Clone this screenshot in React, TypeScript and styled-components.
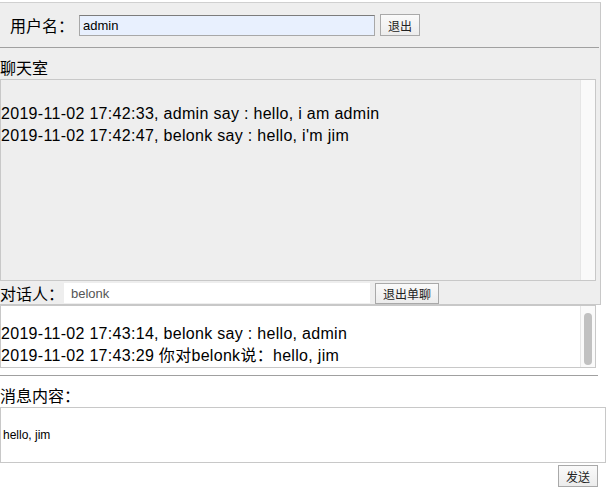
import { useEffect, useRef } from "react";
import styled, { createGlobalStyle } from "styled-components";

const GlobalStyle = createGlobalStyle`
  html, body {
    margin: 0;
    padding: 0;
    background: #ffffff;
  }
  body {
    font-family: "Liberation Sans", "Noto Sans CJK SC", sans-serif;
    color: #000;
  }
`;

const groupMessages = [
  "2019-11-02 17:42:33, admin say : hello, i am admin",
  "2019-11-02 17:42:47, belonk say : hello, i'm jim",
];

const privateMessages = [
  "2019-11-02 17:43:14, belonk say : hello, admin",
  "2019-11-02 17:43:29 你对belonk说：hello, jim",
];

export default function App() {
  const privateRef = useRef<HTMLDivElement>(null);

  useEffect(() => {
    const el = privateRef.current;
    if (el) el.scrollTop = el.scrollHeight;
  }, []);

  return (
    <>
      <GlobalStyle />
      <Panel>
        <Header>
          <Label>用户名：</Label>
          <UserInput defaultValue="admin" />
          <Button>退出</Button>
        </Header>
        <Title>聊天室</Title>
        <MessageBox $bg="#eeeeee" $height={202}>
          <Messages $offset={1}>
            <br />
            {groupMessages.map((m) => (
              <div key={m}>{m}</div>
            ))}
          </Messages>
          <Track />
        </MessageBox>
        <TalkRow>
          <Label>对话人：</Label>
          <TalkInput defaultValue="belonk" />
          <Button $wide>退出单聊</Button>
        </TalkRow>
      </Panel>
      <MessageBox $bg="#ffffff" $height={63}>
        <Messages ref={privateRef}>
          <br />
          {privateMessages.map((m) => (
            <div key={m}>{m}</div>
          ))}
        </Messages>
        <Track>
          <Thumb />
        </Track>
      </MessageBox>
      <Divider />
      <Title>消息内容：</Title>
      <ContentArea defaultValue={"\nhello, jim"} />
      <SendRow>
        <Button>发送</Button>
      </SendRow>
    </>
  );
}

const Panel = styled.div`
  margin-top: 2px;
  width: 600px;
  background: #eeeeee;
  border-top: 1px solid #d0d0d0;
  border-right: 1px solid #c8c8c8;
  border-bottom: 1px solid #c8c8c8;
`;

const Header = styled.div`
  display: flex;
  align-items: center;
  height: 44px;
  padding-left: 10px;
  width: 589px;
  border-bottom: 1px solid #a0a0a0;
`;

const Label = styled.span`
  font-family: "Noto Sans CJK SC", sans-serif;
  font-size: 16px;
  line-height: 20px;
  white-space: nowrap;
  width: 64px;
  flex-shrink: 0;
`;

const UserInput = styled.input`
  box-sizing: border-box;
  margin-left: 5px;
  width: 296px;
  height: 21px;
  padding: 0 3px;
  font-family: "Liberation Sans", sans-serif;
  font-size: 13px;
  color: #000;
  background: #e8f0fe;
  border: 1px solid #a8a8a8;
  border-top-color: #7c7c7c;
  outline: none;
`;

const Button = styled.button<{ $wide?: boolean }>`
  box-sizing: border-box;
  margin-left: 5px;
  height: ${(p) => (p.$wide ? "21px" : "22px")};
  width: ${(p) => (p.$wide ? "64px" : "40px")};
  padding: 0;
  font-family: "Noto Sans CJK SC", sans-serif;
  font-size: 12px;
  color: #222;
  background: linear-gradient(#fafafa, #ececec);
  border: 1px solid #a9a9a9;
  border-radius: 0;
`;

const Title = styled.div`
  font-family: "Noto Sans CJK SC", sans-serif;
  font-size: 16px;
  line-height: 23px;
  padding-top: 8px;
  height: 23px;
`;

const MessageBox = styled.div<{ $bg: string; $height: number }>`
  box-sizing: border-box;
  display: flex;
  width: 596px;
  height: ${(p) => p.$height}px;
  background: ${(p) => p.$bg};
  border: 1px solid #c8c8c8;
`;

const Messages = styled.div<{ $offset?: number }>`
  flex: 1;
  overflow: hidden;
  padding-top: ${(p) => p.$offset ?? 0}px;
  font-family: "Liberation Sans", "Noto Sans CJK SC", sans-serif;
  font-size: 16px;
  line-height: 22px;
  letter-spacing: 0.3px;
  white-space: nowrap;
`;

const Track = styled.div`
  display: flex;
  flex-direction: column;
  width: 14px;
  flex-shrink: 0;
  background: #fafafa;
  border-left: 1px solid #e6e6e6;
`;

const Thumb = styled.div`
  flex: 1;
  margin: 7px 3px 2px 3px;
  background: #c1c1c1;
  border-radius: 4px;
`;

const TalkRow = styled.div`
  display: flex;
  align-items: flex-start;
  height: 21px;
  padding-top: 2px;
`;

const TalkInput = styled.input`
  box-sizing: border-box;
  width: 306px;
  height: 20px;
  padding: 0 7px;
  font-family: "Liberation Sans", sans-serif;
  font-size: 13px;
  color: #555;
  background: #ffffff;
  border: none;
  outline: none;
`;

const Divider = styled.div`
  margin-top: 7px;
  width: 598px;
  border-top: 1px solid #a0a0a0;
`;

const ContentArea = styled.textarea`
  display: block;
  box-sizing: border-box;
  width: 606px;
  height: 56px;
  margin: 0;
  padding: 3px 2px;
  resize: none;
  font-family: "Liberation Sans", sans-serif;
  font-size: 12px;
  line-height: 16px;
  color: #000;
  background: #fff;
  border: 1px solid #c8c8c8;
  outline: none;
`;

const SendRow = styled.div`
  display: flex;
  justify-content: flex-end;
  width: 598px;
  padding-top: 2px;
`;
